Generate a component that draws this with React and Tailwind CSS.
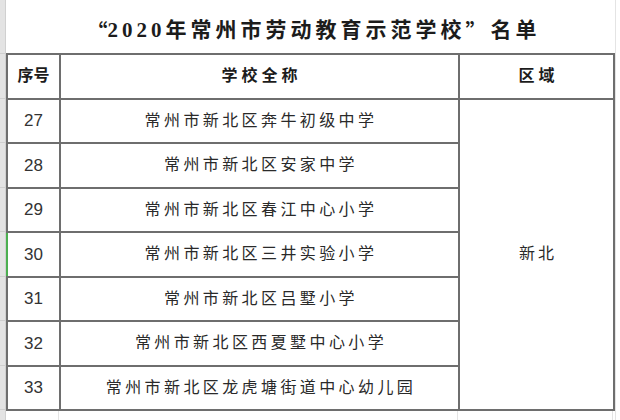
const rows = [
  { no: 27, name: '常州市新北区奔牛初级中学' },
  { no: 28, name: '常州市新北区安家中学' },
  { no: 29, name: '常州市新北区春江中心小学' },
  { no: 30, name: '常州市新北区三井实验小学', active: true },
  { no: 31, name: '常州市新北区吕墅小学' },
  { no: 32, name: '常州市新北区西夏墅中心小学' },
  { no: 33, name: '常州市新北区龙虎塘街道中心幼儿园' },
];

const song = { fontFamily: '"Liberation Serif", "Noto Sans CJK SC", serif' };
const cjk = { fontFamily: '"Noto Sans CJK SC", sans-serif' };

export default function App() {
  return (
    <div className="w-[620px] h-[420px] bg-white overflow-hidden flex text-[#1c1c1c]">
      {/* row header strip of the sheet */}
      <div className="w-[6px] flex flex-col bg-[#e3e3e3] border-r border-[#d0d0d0]">
        <div className="h-[54px] border-b border-[#cfcfcf]" />
        <div className="h-[44.5px] border-b border-[#cfcfcf]" />
        {rows.map((r) => (
          <div key={r.no} className="h-[44.5px] border-b border-[#cfcfcf]" />
        ))}
      </div>

      <div className="flex-1 flex flex-col">
        <div className="h-[2px] bg-[#e2e2e2]" />
        <div className="flex">
          <div className="w-[607px]">
            <div
              className="h-[53px] flex items-center justify-center pt-[8px] pl-[4px] text-[21px] font-bold tracking-[4px]"
              style={song}
            >
              <span className="inline-block w-[25px] text-right tracking-normal" style={cjk}>“</span>
              2020年常州市劳动教育示范学校
              <span className="inline-block w-[25px] text-left tracking-normal" style={cjk}>”</span>
              名单
            </div>

            <table className="table-fixed border-collapse w-[607px]">
              <colgroup>
                <col className="w-[53px]" />
                <col className="w-[399px]" />
                <col className="w-[155px]" />
              </colgroup>
              <thead>
                <tr className="h-[44.5px]">
                  <th
                    className="border-2 border-[#6e6e6e] text-[16px] font-bold p-0"
                    style={song}
                  >
                    序号
                  </th>
                  <th
                    className="border-2 border-[#6e6e6e] text-[16px] font-bold tracking-[4px] pl-[4px] p-0"
                    style={song}
                  >
                    学校全称
                  </th>
                  <th
                    className="border-2 border-[#6e6e6e] text-[16px] font-bold tracking-[4px] pl-[4px] p-0"
                    style={song}
                  >
                    区域
                  </th>
                </tr>
              </thead>
              <tbody>
                {rows.map((r, i) => (
                  <tr key={r.no} className="h-[44.5px]">
                    <td
                      className={`border-2 border-[#6e6e6e] text-center text-[17px] text-[#333] p-0 font-['Liberation_Sans',sans-serif] ${
                        r.active ? 'border-l-[#4caf50]' : ''
                      }`}
                    >
                      {r.no}
                    </td>
                    <td
                      className="border-2 border-[#6e6e6e] text-center text-[16px] tracking-[3.4px] pl-[3px] p-0 text-[#2a2a2a]"
                      style={song}
                    >
                      {r.name}
                    </td>
                    {i === 0 && (
                      <td
                        rowSpan={rows.length}
                        className="border-2 border-[#6e6e6e] text-center text-[16px] tracking-[3px] pl-[3px] p-0 text-[#2a2a2a]"
                        style={song}
                      >
                        新北
                      </td>
                    )}
                  </tr>
                ))}
              </tbody>
            </table>

            {/* empty sheet row under the table */}
            <div className="flex h-[20px]">
              <div className="w-[53px] border-r border-[#e4e4e4]" />
              <div className="w-[399px] border-r border-[#e4e4e4]" />
              <div className="w-[155px] border-r border-[#e4e4e4]" />
            </div>
          </div>
          <div className="flex-1 border-l border-[#e4e4e4] ml-[2px]" />
        </div>
      </div>
    </div>
  );
}
